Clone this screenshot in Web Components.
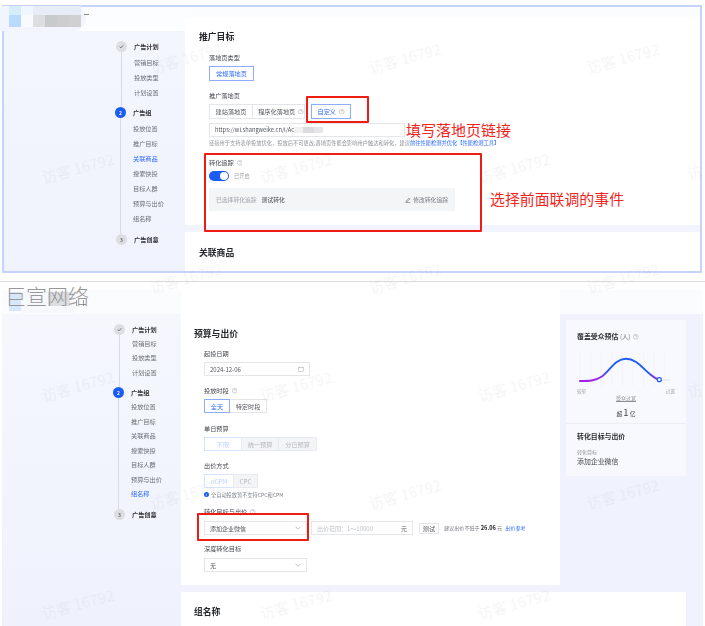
<!DOCTYPE html>
<html lang="zh">
<head>
<meta charset="utf-8">
<title>广告组</title>
<style>
  html, body { margin: 0; height: 626px; overflow: hidden; background: #fff; }
  body { position: relative; font-family: "Noto Sans CJK SC", "Noto Sans", sans-serif; color: #333; }
</style>
</head>
<body>
<shot-top></shot-top>
<shot-bottom></shot-bottom>
<water-marks></water-marks>

<script>
// small base class, every element just sets css + html
class Base extends HTMLElement {
  constructor() {
    super();
    this.attachShadow({ mode: 'open' });
  }
  connectedCallback() {
    this.shadowRoot.innerHTML = `<style>${this.css()}</style>${this.html()}`;
  }
  css() { return ':host{display:block}'; }
  html() { return '<slot></slot>'; }
}

class HelpDot extends Base {
  css() { return `:host{display:inline-flex;margin-left:3px;vertical-align:-0.5px}svg{display:block}`; }
  html() {
    return `<svg width="5.5" height="5.5" viewBox="0 0 12 12" fill="none" stroke="#a9adb5" stroke-width="1.2">
      <circle cx="6" cy="6" r="5.2"/><path d="M4.4 4.8a1.6 1.6 0 1 1 2.3 1.4c-.5.3-.7.5-.7 1.1M6 8.6v.9"/></svg>`;
  }
}
customElements.define('help-dot', HelpDot);

class NavStep extends Base {
  css() {
    return `
      :host{display:flex;gap:7px;padding-bottom:var(--end,7.5px)}
      :host([state=active]){margin-left:-1px}
      .rail{display:flex;flex-direction:column;align-items:center;width:11px;flex:none}
      .dot{width:11px;height:11px;border-radius:50%;background:#dcdee3;color:#666;font-size:5px;font-weight:700;
        display:flex;align-items:center;justify-content:center;flex:none}
      :host([state=active]) .dot{background:#1b5cf3;color:#fff}
      .line{flex:1;width:1px;background:#d8dbe2;margin-bottom:calc(var(--end,7.5px) * -1)}
      :host([last]) .line{display:none}
      .head{height:11px;line-height:11px;font-size:6.2px;font-weight:700;color:#333;white-space:nowrap}
      .items{padding-top:var(--gap,3px)}`;
  }
  html() {
    const st = this.getAttribute('state');
    const mark = st === 'done'
      ? `<svg width="5" height="5" viewBox="0 0 10 10" fill="none" stroke="#555" stroke-width="1.6"><path d="M1.5 5.2l2.4 2.4 4.6-5"/></svg>`
      : this.getAttribute('num');
    return `<div class="rail"><div class="dot">${mark}</div><div class="line"></div></div>
      <div><div class="head">${this.getAttribute('label')}</div><div class="items"><slot></slot></div></div>`;
  }
}
customElements.define('nav-step', NavStep);

class NavLink extends Base {
  css() {
    return `:host{display:block;height:var(--row,15px);line-height:var(--row,15px);font-size:6.2px;color:#6a6d73;white-space:nowrap}
      :host([on]){color:#2f6bff}`;
  }
}
customElements.define('nav-link', NavLink);

class SideNav extends Base {
  css() { return `:host{display:block;padding:9.5px 0 0 112px}`; }
  html() {
    const cur = this.getAttribute('current');
    const group = ['投放位置', '推广目标', '关联商品', '搜索快投', '目标人群', '预算与出价', '组名称'];
    return `
      <nav-step state="done" label="广告计划">
        <nav-link>营销目标</nav-link><nav-link>投放类型</nav-link><nav-link>计划设置</nav-link>
      </nav-step>
      <nav-step state="active" num="2" label="广告组">
        ${group.map(t => `<nav-link ${t === cur ? 'on' : ''}>${t}</nav-link>`).join('')}
      </nav-step>
      <nav-step state="todo" num="3" label="广告创意" last></nav-step>`;
  }
}
customElements.define('side-nav', SideNav);

class CardTitle extends Base {
  css() { return `:host{display:block;font-size:8.8px;line-height:12px;font-weight:700;color:#26282c}`; }
}
customElements.define('card-title', CardTitle);

class FieldLabel extends Base {
  css() { return `:host{display:block;font-size:6.2px;line-height:8px;color:#44474d;white-space:nowrap}`; }
}
customElements.define('field-label', FieldLabel);

class SegGroup extends Base {
  css() { return `:host{display:flex;height:var(--h,14px)}`; }
}
customElements.define('seg-group', SegGroup);

class SegBtn extends Base {
  css() {
    return `:host{display:flex;align-items:center;justify-content:center;box-sizing:border-box;border:1px solid #e3e5e9;margin-left:-1px;
        font-size:6.2px;color:#54575d;background:#fff;white-space:nowrap}
      :host(:first-child){margin-left:0}
      :host([on]){border-color:#8dadfa;color:#2f6bff;position:relative}
      :host([off]){background:#f3f4f6;color:#b4b7bd;border-color:#e9eaed}
      :host([pale]){border-color:#d8e4fd;color:#bcd0fb}`;
  }
}
customElements.define('seg-btn', SegBtn);

class TextBox extends Base {
  css() {
    return `:host{display:flex;align-items:center;justify-content:space-between;box-sizing:border-box;height:14px;padding:0 5px;
        border:1px solid #e4e6ea;font-size:6px;color:#54575d;background:#fff;white-space:nowrap}
      :host([quiet]){color:#c0c3c9}`;
  }
  html() { return `<span><slot></slot></span><slot name="end"></slot>`; }
}
customElements.define('text-box', TextBox);

class ChevDown extends Base {
  css() { return `:host{display:block}svg{display:block}`; }
  html() {
    return `<svg width="6" height="4" viewBox="0 0 12 8" fill="none" stroke="#9a9da3" stroke-width="1.3"><path d="M1 1.5l5 5 5-5"/></svg>`;
  }
}
customElements.define('chev-down', ChevDown);

class TogglePill extends Base {
  css() {
    return `:host{display:flex;align-items:center;width:20px;height:10px;border-radius:5px;background:#1b5cf3;justify-content:flex-end;padding:0 1px;box-sizing:border-box}
      i{display:block;width:8px;height:8px;border-radius:50%;background:#fff}`;
  }
  html() { return `<i></i>`; }
}
customElements.define('toggle-pill', TogglePill);

class RedBox extends Base {
  css() {
    const a = n => this.getAttribute(n) + 'px';
    return `:host{position:absolute;left:${a('x')};top:${a('y')};width:${a('w')};height:${a('h')};box-sizing:border-box;border:2px solid #ee1c13;border-radius:1px;z-index:5}`;
  }
  html() { return ''; }
}
customElements.define('red-box', RedBox);

class RedNote extends Base {
  css() {
    const a = n => this.getAttribute(n) + 'px';
    return `:host{position:absolute;left:${a('x')};top:${a('y')};font-size:${a('s')};line-height:20px;color:#f0261c;white-space:nowrap;z-index:5}`;
  }
}
customElements.define('red-note', RedNote);

class AudienceCard extends Base {
  css() {
    return `
      :host{display:block;width:120px;height:156px;box-sizing:border-box;background:#f7f9fe;border-radius:2px;color:#2c2e33}
      .top{padding:11px 0 0 11px;height:104px;box-sizing:border-box;border-bottom:1px solid #eceef3}
      h4{margin:0;font-size:6.9px;line-height:10px;font-weight:700;white-space:nowrap}
      h4 span{font-weight:400;color:#777;font-size:6.2px}
      svg{display:block;margin-top:9px}
      .ends{display:flex;justify-content:space-between;width:98px;margin-top:2px;font-size:4.6px;line-height:6px;color:#9a9da3}
      .mid{width:98px;text-align:center;font-size:5px;line-height:7px;color:#8b8e94;text-decoration:underline}
      .big{width:98px;text-align:center;font-size:5.8px;line-height:10px;margin-top:5.5px;color:#44474d}
      .big b{font-size:9.5px;font-weight:400;margin:0 1px}
      .low{padding:7px 0 0 11px}
      .sub{font-size:5px;line-height:7px;color:#93969c;margin-top:7px}
      .val{font-size:6.9px;line-height:10px;color:#44474d;white-space:nowrap;margin-top:1px}`;
  }
  html() {
    const ticks = [];
    for (let x = 3; x < 96; x += 10.6) ticks.push(`<path d="M${x} 0V35" stroke="#edf0f6" stroke-width=".6"/>`);
    return `
      <div class="top">
        <h4>覆盖受众预估 <span>(人)</span><help-dot></help-dot></h4>
        <svg width="98" height="35" viewBox="0 0 98 35" fill="none">
          <defs><linearGradient id="arc" gradientUnits="userSpaceOnUse" x1="3" y1="0" x2="83" y2="0">
            <stop offset="0" stop-color="#a51fe2"/><stop offset=".24" stop-color="#9a25e6"/><stop offset=".36" stop-color="#1f5cf5"/>
            <stop offset=".84" stop-color="#1f5cf5"/><stop offset=".97" stop-color="#9a25e6"/>
          </linearGradient></defs>
          ${ticks.join('')}
          <path d="M83 29H93" stroke="#dfe2e8" stroke-width="1"/>
          <path d="M3 30C12 30 18 30 24 26C32 21 38 7.7 48.7 7.7C60 7.7 66 18 74 24C77 26.5 79 28 82.3 28.7" stroke="url(#arc)" stroke-width="1.9" stroke-linecap="round"/>
          <circle cx="82.3" cy="28.7" r="2" fill="#fff" stroke="#1f5cf5" stroke-width="1.2"/>
        </svg>
        <div class="ends"><span>较窄</span><span>过宽</span></div>
        <div class="mid">受众过宽</div>
        <div class="big">超<b>1</b>亿</div>
      </div>
      <div class="low">
        <h4>转化目标与出价</h4>
        <div class="sub">转化目标</div>
        <div class="val">添加企业微信</div>
      </div>`;
  }
}
customElements.define('audience-card', AudienceCard);

class ShotTop extends Base {
  css() {
    return `
      :host{display:block;position:relative;box-sizing:border-box;width:700px;height:268px;margin:5px 0 0 2px;border:2px solid #c6d4fb;background:#f1f4fd;overflow:visible}
      .soft{filter:blur(.4px);display:grid;grid-template-columns:181px 1fr;height:100%;overflow:hidden}
      .left{display:flex;flex-direction:column}
      .band{height:24px;background:#fcfdff;flex:none}
      .nav{flex:1;background:linear-gradient(#f3f6fd,#f0f3fd)}
      .right{display:flex;flex-direction:column;background:linear-gradient(#fbfcfe 0 10px,#f1f4fd 10px)}
      .card{background:#fff;padding-left:14px}
      .one{margin-top:10px;height:208px;box-sizing:border-box;padding-top:14px}
      .two{margin-top:7px;flex:1;padding-top:15px}
      .form{padding-left:10px}
      .help{font-size:5.25px;line-height:7px;color:#8f9298;white-space:nowrap}
      .help a{color:#2f6bff}
      .url{font-size:5.7px}
      .mask{display:inline-block;width:29px;height:6px;vertical-align:-1px;background:linear-gradient(90deg,#f2f2f3 0 30%,#dcdcde 30% 70%,#e6e6e8 70%)}
      .sw{display:flex;align-items:center;gap:5px;font-size:5.3px;color:#9a9da3}
      .track{display:flex;align-items:center;width:246px;height:23px;background:#f4f5f7;padding:0 7px;box-sizing:border-box;font-size:5.8px;white-space:nowrap}
      .track .k{color:#a3a6ac}
      .track .v{color:#44474d;margin-left:5px}
      .track .e{margin-left:auto;color:#777a80;display:flex;align-items:center;gap:2px}
      .blob{position:absolute;left:-4px;top:-1px;width:86px;height:25px;background:#f2f5fd;border-radius:2px 13px 13px 2px;filter:blur(.6px);z-index:2}
      .blob i{position:absolute;display:block}
      .tilde{position:absolute;left:80px;top:7px;width:5px;height:1px;background:#888;z-index:2}`;
  }
  html() {
    const cells = [
      [9, 0, 12, 9, '#d5ecfb'], [21, 0, 12, 9, '#f0f6fe'], [33, 0, 48, 9, '#e8ecf6'],
      [9, 9, 12, 12, '#b8dafd'], [21, 9, 12, 12, '#f7fafe'], [33, 9, 12, 12, '#dcdee0'],
      [45, 9, 12, 12, '#c9cacc'], [57, 9, 12, 12, '#cdcdcf'], [69, 9, 12, 12, '#d0d0d2']
    ];
    return `
      <div class="soft">
        <div class="left"><div class="band"></div><div class="nav"><side-nav current="关联商品"></side-nav></div></div>
        <div class="right">
          <div class="card one">
            <card-title>推广目标</card-title>
            <div class="form">
              <field-label style="margin-top:11px">落地页类型</field-label>
              <seg-group style="margin-top:4px;--h:15px"><seg-btn on style="width:45px">常规落地页</seg-btn></seg-group>
              <field-label style="margin-top:11px">推广落地页</field-label>
              <seg-group style="margin-top:4px;--h:14.5px">
                <seg-btn style="width:44px">建站落地页</seg-btn>
                <seg-btn style="width:53px;padding-left:5px">程序化落地页<help-dot></help-dot></seg-btn>
                <seg-btn on style="width:40px;margin-left:6px">自定义<help-dot></help-dot></seg-btn>
              </seg-group>
              <text-box style="margin-top:4.5px;width:196px;height:13.5px;justify-content:flex-start"><span class="url">https://wl.shangweike.cn/l/Ac</span><span class="mask"></span></text-box>
              <div class="help" style="margin-top:3px">链接用于支持表单投放优化，投放后不可更改,落地页性能会影响用户触达和转化，建议<a>前往性能检测并优化</a><a>【性能检测工具】</a></div>
              <field-label style="margin-top:12.5px">转化追踪<help-dot></help-dot></field-label>
              <div class="sw" style="margin-top:4px"><toggle-pill></toggle-pill>已开启</div>
              <div class="track" style="margin-top:7px">
                <span class="k">已选择转化追踪</span><span class="v">测试转化</span>
                <span class="e"><svg width="6" height="6" viewBox="0 0 12 12" fill="none" stroke="#666" stroke-width="1.2"><path d="M2 8.5L8.5 2l1.5 1.5L3.5 10H2zM1 11.3h10"/></svg>修改转化追踪</span>
              </div>
            </div>
          </div>
          <div class="card two"><card-title>关联商品</card-title></div>
        </div>
      </div>
      <div class="blob">${cells.map(c => `<i style="left:${c[0]}px;top:${c[1]}px;width:${c[2]}px;height:${c[3]}px;background:${c[4]}"></i>`).join('')}</div>
      <div class="tilde"></div>
      <red-box x="302" y="89" w="63" h="27"></red-box>
      <red-box x="200" y="146" w="278" h="79"></red-box>
      <red-note x="402" y="113" s="15">填写落地页链接</red-note>
      <red-note x="486" y="182" s="14.9">选择前面联调的事件</red-note>`;
  }
}
customElements.define('shot-top', ShotTop);

class ShotBottom extends Base {
  css() {
    return `
      :host{display:block;position:absolute;left:0;top:281px;width:705px;height:345px;box-sizing:border-box;border-top:1px solid #dcdcdc;padding-top:8px}
      .soft{filter:blur(.4px);display:flex;width:701px;height:336px;margin-left:2px;overflow:hidden}
      .left{display:flex;flex-direction:column;width:179px;flex:none}
      .band{height:24px;background:#fbfcfe;flex:none}
      .nav{flex:1;background:linear-gradient(#f5f7fd,#eff2fd);--row:14.55px;--gap:2px;--end:7px}
      .right{flex:1;display:grid;grid-template-columns:379px 143px;grid-template-rows:295px 1fr;row-gap:7px;
        background:radial-gradient(90px 80px at 130px 40px,#e9f2fc,transparent),linear-gradient(#fbfcfe 0 24px,#f0f3fd 24px)}
      .card{background:#fff;padding-left:13px}
      .main{padding-top:38px;box-sizing:border-box}
      .form{padding-left:10px}
      .panel{padding:30px 0 0 6px}
      .two{grid-column:1 / 3;width:505px;box-sizing:border-box;padding-top:14px}
      .note{display:flex;align-items:center;gap:2px;font-size:5.2px;line-height:7px;color:#7d8086;white-space:nowrap}
      .pick{display:flex;align-items:center;gap:4px;white-space:nowrap}
      .tip{font-size:5.1px;color:#777a80;margin-left:1px}
      .tip b{color:#222;font-weight:700;font-size:5.6px}
      .tip a{color:#2f6bff;margin-left:2px}
      .wordmark{position:absolute;left:5px;top:0;font-size:21px;line-height:27px;font-weight:300;color:#979797;white-space:nowrap;z-index:3}
      .ghost{position:absolute;top:10px;z-index:2;filter:blur(.6px)}
      .g1{left:9px;width:12px;height:19px;background:#d5e7fb}
      .g2{left:48px;width:22px;height:14px;background:#dcdde0}
      .g3{left:21px;width:54px;height:22px;top:9px;background:#f6f8fc;z-index:1}
      .jd{position:absolute;left:76px;top:18px;width:8px;height:6px;z-index:3;border-left:1px solid #777;border-right:1px solid #777;box-sizing:border-box;opacity:.7}`;
  }
  html() {
    const date = `<svg slot="end" width="6" height="6" viewBox="0 0 12 12" fill="none" stroke="#aaa" stroke-width="1"><rect x="1.5" y="2.5" width="9" height="8.5"/><path d="M3.5 1v2.5M8.5 1v2.5"/></svg>`;
    return `
      <div class="ghost g3"></div><div class="ghost g1"></div><div class="ghost g2"></div>
      <div class="wordmark">巨宣网络</div>
      <div class="jd"></div>
      <div class="soft">
        <div class="left"><div class="band"></div><div class="nav"><side-nav current="组名称"></side-nav></div></div>
        <div class="right">
          <div class="card main">
            <card-title>预算与出价</card-title>
            <div class="form">
              <field-label style="margin-top:10px">起投日期</field-label>
              <text-box style="margin-top:4px;width:106px">2024-12-06${date}</text-box>
              <field-label style="margin-top:11px">投放时段<help-dot></help-dot></field-label>
              <seg-group style="margin-top:4px">
                <seg-btn on style="width:26px">全天</seg-btn><seg-btn style="width:38px">特定时段</seg-btn>
              </seg-group>
              <field-label style="margin-top:12px">单日预算</field-label>
              <seg-group style="margin-top:4px">
                <seg-btn pale style="width:38px">不限</seg-btn><seg-btn off style="width:38px">统一预算</seg-btn><seg-btn off style="width:39px">分日预算</seg-btn>
              </seg-group>
              <field-label style="margin-top:11px">出价方式</field-label>
              <seg-group style="margin-top:4px">
                <seg-btn pale style="width:30px">oCPM</seg-btn><seg-btn off style="width:25px">CPC</seg-btn>
              </seg-group>
              <div class="note" style="margin-top:2.5px">
                <svg width="5" height="5" viewBox="0 0 10 10"><circle cx="5" cy="5" r="5" fill="#1b5cf3"/><path d="M5 2.2v.9M5 4.2v3.5" stroke="#fff" stroke-width="1.1"/></svg>全自动投放暂不支持CPC和CPM
              </div>
              <field-label style="margin-top:10.5px">转化目标与出价<help-dot></help-dot></field-label>
              <div class="pick" style="margin-top:5px">
                <text-box style="width:103px">添加企业微信<chev-down slot="end"></chev-down></text-box>
                <text-box quiet style="width:102px">出价范围：1～10000<span slot="end" style="color:#54575d">元</span></text-box>
                <seg-btn style="width:20px;height:11px;margin-left:2px">测试</seg-btn>
                <span class="tip">建议出价不低于 <b>26.06</b> 元 <a>出价参考</a></span>
              </div>
              <field-label style="margin-top:10px">深度转化目标</field-label>
              <text-box style="margin-top:5px;width:103px">无<chev-down slot="end"></chev-down></text-box>
            </div>
          </div>
          <div class="panel"><audience-card></audience-card></div>
          <div class="card two"><card-title>组名称</card-title></div>
        </div>
      </div>
      <red-box x="197" y="231" w="112" h="28"></red-box>`;
  }
}
customElements.define('shot-bottom', ShotBottom);

class WaterMarks extends Base {
  css() {
    return `:host{position:absolute;inset:0;overflow:hidden;pointer-events:none;z-index:9}
      span{position:absolute;width:90px;margin:-10px 0 0 -45px;text-align:center;font-size:14.5px;line-height:20px;letter-spacing:.2px;
        color:rgba(95,105,130,.07);transform:rotate(-15deg);white-space:nowrap;filter:blur(.3px)}
      .edge{width:15px;margin:-10px 0 0 0}`;
  }
  html() {
    const out = [];
    const put = (xs, ys) => ys.forEach(y => xs.forEach(x => out.push(`<span style="left:${x}px;top:${y}px">访客 16792</span>`)));
    put([186, 405, 623], [58, 278, 494]);
    put([78, 296, 514], [168, 386, 604]);
    // only the first glyph of the last column shows in the picture
    [172, 390].forEach(y => out.push(`<span class="edge" style="left:687px;top:${y}px">访</span>`));
    return out.join('');
  }
}
customElements.define('water-marks', WaterMarks);
</script>
</body>
</html>
